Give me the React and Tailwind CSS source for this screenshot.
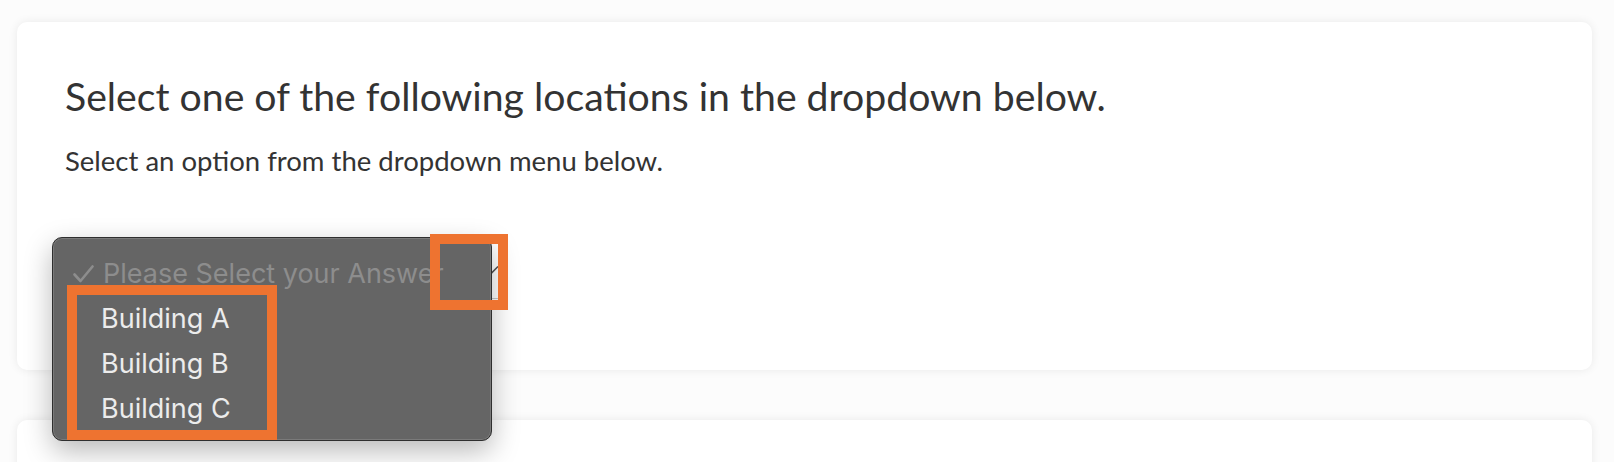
import React from 'react';

const options = ['Building A', 'Building B', 'Building C'];

const App = () => {
  return (
    <div className="flex min-h-screen flex-col gap-[50px] overflow-hidden bg-[#fcfcfc] pt-[22px] font-['Lato',sans-serif] text-[#333333]">
      {/* Question card */}
      <div className="ml-[17px] mr-[22px] flex h-[348px] shrink-0 flex-col rounded-[10px] bg-white px-[48px] pt-[50px] shadow-[0_0_10px_rgba(0,0,0,0.08)]">
        <h2 className="text-[39.2px] leading-[1.2] font-normal">
          Select one of the following locations in the dropdown below.
        </h2>
        <p className="mt-[25px] text-[27.5px] leading-[1.2]">Select an option from the dropdown menu below.</p>

        {/* Dropdown with the open native-style menu over it */}
        <div className="relative ml-[-13px] mt-[60px] h-[204px] w-[440px] shrink-0">
          {/* the select underneath */}
          <div className="ml-[8px] mt-[3px] flex h-[59px] w-[444px] items-center justify-end rounded-[6px] border border-[#c9c9c9] bg-white pr-[4px]">
            <svg width="16" height="10" viewBox="0 0 16 10" fill="none">
              <path d="M1 1.5 L8 8.5 L15 1.5" stroke="#555" strokeWidth="1.6" />
            </svg>
          </div>

          {/* open menu */}
          <div className="absolute inset-0 z-10 flex flex-col rounded-[10px] border border-[#2f2f2f] bg-[#656565] pt-[13px] font-['Inter',sans-serif] text-[27px] leading-[45px] shadow-[0_10px_28px_rgba(0,0,0,0.28),inset_0_0_0_1px_rgba(255,255,255,0.14)]">
            <div className="flex h-[45px] items-center gap-[9px] pl-[20px] text-[#8d8d8d]">
              <svg width="21" height="18" viewBox="0 0 21 18" fill="none">
                <path d="M1.5 9.5 L7.5 16 L19.5 1.5" stroke="#8d8d8d" strokeWidth="2.6" strokeLinecap="round" strokeLinejoin="round" />
              </svg>
              <span>Please Select your Answer</span>
            </div>
            {options.map((opt) => (
              <div key={opt} className="h-[45px] shrink-0 pl-[48px] text-[#ececec]">
                {opt}
              </div>
            ))}
          </div>

          {/* annotation boxes */}
          <div className="absolute left-[378px] top-[-3px] z-20 h-[76px] w-[78px] border-[10px] border-[#ee7330]" />
          <div className="absolute left-[15px] top-[48px] z-20 h-[155px] w-[210px] border-[10px] border-[#ee7330]" />
        </div>
      </div>

      {/* Next card */}
      <div className="ml-[17px] mr-[22px] h-[200px] shrink-0 rounded-[10px] bg-white shadow-[0_0_10px_rgba(0,0,0,0.08)]" />
    </div>
  );
};

export default App;
